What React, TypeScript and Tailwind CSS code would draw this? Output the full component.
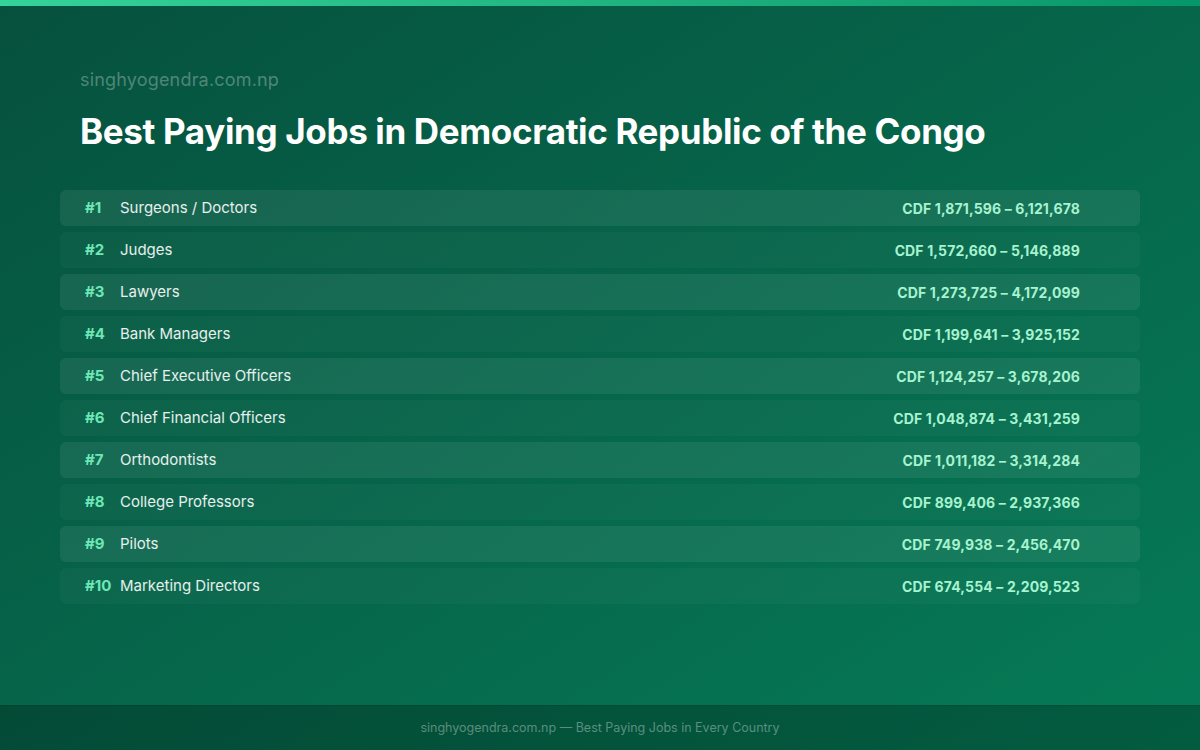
const jobs = [
  { rank: 1, title: 'Surgeons / Doctors', range: 'CDF 1,871,596 – 6,121,678' },
  { rank: 2, title: 'Judges', range: 'CDF 1,572,660 – 5,146,889' },
  { rank: 3, title: 'Lawyers', range: 'CDF 1,273,725 – 4,172,099' },
  { rank: 4, title: 'Bank Managers', range: 'CDF 1,199,641 – 3,925,152' },
  { rank: 5, title: 'Chief Executive Officers', range: 'CDF 1,124,257 – 3,678,206' },
  { rank: 6, title: 'Chief Financial Officers', range: 'CDF 1,048,874 – 3,431,259' },
  { rank: 7, title: 'Orthodontists', range: 'CDF 1,011,182 – 3,314,284' },
  { rank: 8, title: 'College Professors', range: 'CDF 899,406 – 2,937,366' },
  { rank: 9, title: 'Pilots', range: 'CDF 749,938 – 2,456,470' },
  { rank: 10, title: 'Marketing Directors', range: 'CDF 674,554 – 2,209,523' },
];

export default function App() {
  return (
    <div className="w-[1200px] h-[750px] flex flex-col bg-gradient-to-br from-[#06513e] to-[#057b56] font-['Inter','Liberation_Sans',sans-serif] overflow-hidden">
      {/* accent bar */}
      <div className="h-[6px] bg-gradient-to-r from-[#34d399] to-[#059669]" />

      <div className="flex-1 px-20 pt-[61px]">
        <p className="text-[18px] leading-[26px] tracking-[0.01em] text-white/30">singhyogendra.com.np</p>
        <h1 className="mt-[16px] text-[35px] leading-[44px] font-bold text-white tracking-[-0.01em]">
          Best Paying Jobs in Democratic Republic of the Congo
        </h1>

        {/* Ranking list */}
        <div className="-mx-5 mt-[37px] flex flex-col gap-[6px]">
          {jobs.map((job) => (
            <div
              key={job.rank}
              className={
                job.rank % 2 === 1
                  ? 'h-9 flex items-center pl-[25px] pr-[60px] rounded-md bg-white/[0.07]'
                  : 'h-9 flex items-center pl-[25px] pr-[60px] rounded-md bg-white/[0.03]'
              }
            >
              <span className="w-[35px] text-[15px] font-bold text-[#6ee7b7]">#{job.rank}</span>
              <span className="flex-1 text-[15px] text-white/90">{job.title}</span>
              <span className="text-[14px] font-bold tracking-[0.01em] text-[#a7f3d0]">{job.range}</span>
            </div>
          ))}
        </div>
      </div>

      {/* footer */}
      <div className="h-[45px] flex items-center justify-center bg-black/25 border-t border-black/10">
        <p className="text-[12.5px] text-white/35">singhyogendra.com.np — Best Paying Jobs in Every Country</p>
      </div>
    </div>
  );
}
